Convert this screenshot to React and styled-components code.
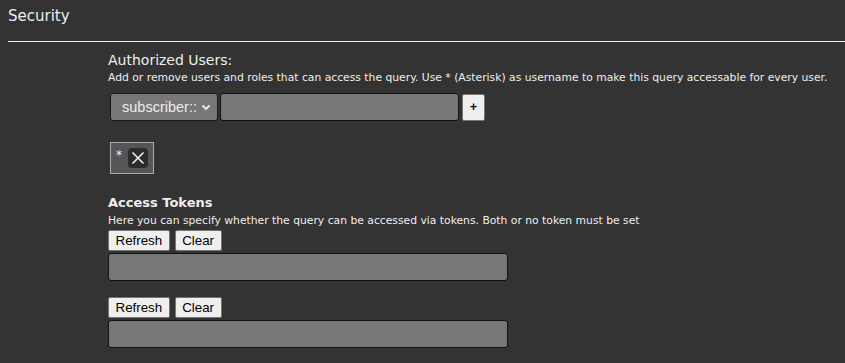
import React from "react";
import styled, { createGlobalStyle } from "styled-components";

const GlobalStyle = createGlobalStyle`
  html, body {
    margin: 0;
    background: #333333;
  }
  body {
    font-family: "DejaVu Sans", Verdana, sans-serif;
    color: #eeeeee;
  }
`;

const Page = styled.div`
  padding: 0 0 0 8px;
  height: 363px;
  overflow: hidden;
`;

const Header = styled.h2`
  margin: 0;
  padding: 6px 0 15px;
  font-size: 15px;
  font-weight: normal;
  line-height: 20px;
  color: #eeeeee;
  border-bottom: 1px solid #eeeeee;
`;

const Body = styled.div`
  padding: 9px 0 0 100px;
`;

const Title = styled.div`
  font-size: ${(p) => (p.bold ? "13px" : "14px")};
  font-weight: ${(p) => (p.bold ? "bold" : "normal")};
  line-height: 18px;
  color: #eeeeee;
`;

const Hint = styled.div`
  font-size: 10.77px;
  line-height: 14px;
  margin-top: 2px;
  color: #eeeeee;
  white-space: nowrap;
`;

const AddRow = styled.div`
  display: flex;
  align-items: center;
  gap: 2px;
  margin: 8px 0 0 2px;
`;

const Select = styled.div`
  box-sizing: border-box;
  display: flex;
  align-items: center;
  justify-content: space-between;
  width: 108px;
  height: 28px;
  padding: 0 5px 0 11px;
  background: #777777;
  border: 1px solid #1a1a1a;
  border-radius: 3px;
  font-family: "Liberation Sans", Arial, sans-serif;
  font-size: 14.5px;
  color: #eeeeee;
`;

const Field = styled.div`
  box-sizing: border-box;
  width: ${(p) => p.w}px;
  height: 28px;
  background: #777777;
  border: 1px solid #111111;
  border-radius: 3px;
`;

const PlusButton = styled.button`
  box-sizing: border-box;
  width: 23px;
  height: 27px;
  margin-left: 1px;
  padding: 0;
  background: #efefef;
  border: 1px solid #767676;
  border-radius: 2px;
  font-family: "Liberation Sans", Arial, sans-serif;
  font-size: 12px;
  font-weight: bold;
  color: #000;
`;

const Tags = styled.div`
  display: flex;
  margin: 21px 0 0 2px;
`;

const Tag = styled.div`
  box-sizing: border-box;
  display: flex;
  align-items: flex-start;
  gap: 6px;
  height: 32px;
  padding: 5px 5px 0 5px;
  background: #555555;
  border: 1px solid #aaaaaa;
  font-size: 12px;
  color: #eeeeee;
`;

const RemoveButton = styled.button`
  display: flex;
  align-items: center;
  justify-content: center;
  width: 20px;
  height: 20px;
  padding: 0;
  border: none;
  border-radius: 4px;
  background: #2c2c2c;
`;

const Section = styled.div`
  margin-top: 20px;
`;

const ButtonRow = styled.div`
  display: flex;
  gap: 5px;
  margin-top: ${(p) => p.top}px;
`;

const SmallButton = styled.button`
  box-sizing: border-box;
  height: 21px;
  padding: 0 6.5px;
  background: #efefef;
  border: 1px solid #767676;
  border-radius: 2px;
  font-family: "Liberation Sans", Arial, sans-serif;
  font-size: 13.33px;
  color: #000;
`;

const TokenField = styled(Field)`
  margin-top: 2px;
`;

const Chevron = () => (
  <svg width="12" height="12" viewBox="0 0 12 12">
    <path d="M2.5 4.5 L6 8 L9.5 4.5" fill="none" stroke="#eeeeee" strokeWidth="1.8" />
  </svg>
);

const Cross = () => (
  <svg width="14" height="14" viewBox="0 0 14 14">
    <path d="M1.5 1.5 L12.5 12.5 M12.5 1.5 L1.5 12.5" stroke="#eeeeee" strokeWidth="1.6" />
  </svg>
);

function TokenBlock({ top }) {
  return (
    <>
      <ButtonRow top={top}>
        <SmallButton>Refresh</SmallButton>
        <SmallButton>Clear</SmallButton>
      </ButtonRow>
      <TokenField w={400} />
    </>
  );
}

export default function App() {
  return (
    <Page>
      <GlobalStyle />
      <Header>Security</Header>
      <Body>
        <Title>Authorized Users:</Title>
        <Hint>
          Add or remove users and roles that can access the query. Use * (Asterisk) as username to make this query accessable for every user.
        </Hint>
        <AddRow>
          <Select>
            <span>subscriber::</span>
            <Chevron />
          </Select>
          <Field w={239} />
          <PlusButton>+</PlusButton>
        </AddRow>
        <Tags>
          <Tag>
            <span>*</span>
            <RemoveButton>
              <Cross />
            </RemoveButton>
          </Tag>
        </Tags>
        <Section>
          <Title bold>Access Tokens</Title>
          <Hint>Here you can specify whether the query can be accessed via tokens. Both or no token must be set</Hint>
          <TokenBlock top={2} />
          <TokenBlock top={16} />
        </Section>
      </Body>
    </Page>
  );
}
